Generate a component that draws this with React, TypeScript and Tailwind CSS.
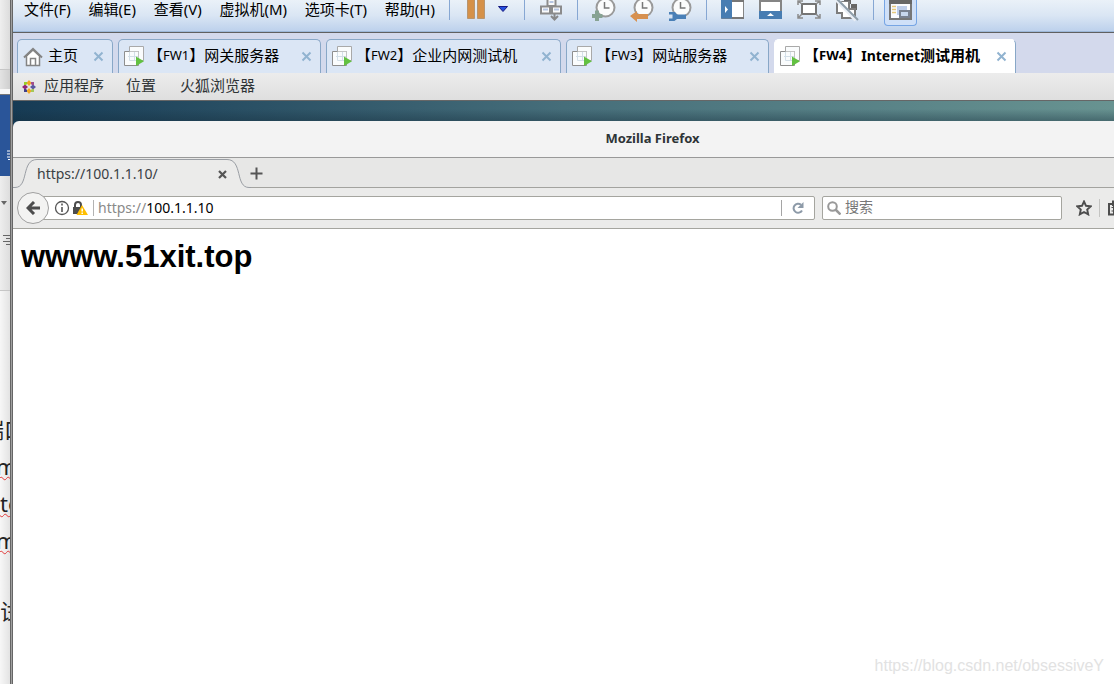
import React from "react";

const menus = ["文件(F)", "编辑(E)", "查看(V)", "虚拟机(M)", "选项卡(T)", "帮助(H)"];

const vmTabs = [
  { code: "FW1", name: "网关服务器", width: "w-[203px]" },
  { code: "FW2", name: "企业内网测试机", width: "w-[235px]" },
  { code: "FW3", name: "网站服务器", width: "w-[203px]" },
  { code: "FW4", name: "Internet测试用机", width: "w-[242px]", active: true },
];

function Separator() {
  return <span className="h-5 w-px shrink-0 bg-[#86a7d3]" />;
}

function ToolButton({ label, children }: { label: string; children: React.ReactNode }) {
  return (
    <button aria-label={label} className="h-6 w-6 shrink-0">
      <svg viewBox="0 0 24 24" width="24" height="24" fill="none">
        {children}
      </svg>
    </button>
  );
}

function Clock() {
  return (
    <>
      <circle cx="13.5" cy="7.5" r="9" fill="#fbfcfc" stroke="#9a9a9a" strokeWidth="2" />
      <path d="M12.5 2v6h5" stroke="#777" strokeWidth="1.5" />
    </>
  );
}

function CloseIcon() {
  return (
    <svg viewBox="0 0 11 11" width="11" height="11">
      <path d="M1.5 1.5l8 8M9.5 1.5l-8 8" stroke="#91b3d0" strokeWidth="2" />
    </svg>
  );
}

function VmIcon() {
  return (
    <svg viewBox="0 0 20 21" width="20" height="21" fill="none" className="shrink-0">
      <path d="M5.5.5h14v14h-14z" fill="#fafcfd" stroke="#a9a9a9" />
      <path d="M.5 5.5h14v14H.5z" fill="#fafcfd" stroke="#8e8e8e" />
      <path d="M5.500 5.500h9v9h-9z" fill="#fafcfd" />
      <path d="M5.5 6v8.500h8.500M10.500 6v8M4 10.500h10" stroke="#d3dfe8" />
      <path d="M12 10.500v9.500l8-4.700z" fill="#62c141" />
    </svg>
  );
}

function HomeIcon() {
  return (
    <svg viewBox="0 0 20 20" width="20" height="20" fill="none" className="shrink-0">
      <path d="M3.500 9v9.500h13V9L10 3z" fill="#fff" stroke="#848484" strokeWidth="1.500" />
      <path d="M1 10.500L10 2l9 8.500" stroke="#848484" strokeWidth="2" />
      <path d="M7.500 18v-6.500h5V18" stroke="#848484" strokeWidth="1.500" />
    </svg>
  );
}

function AppsIcon() {
  return (
    <svg viewBox="0 0 14 14" width="14" height="14" className="shrink-0">
      <path d="M7 0l2.500 3L7 6 4.500 3z" fill="#efa724" />
      <path d="M7 8l2.500 3L7 14l-2.500-3z" fill="#efa724" />
      <path d="M0 7l3-2.500L6 7 3 9.500z" fill="#932279" />
      <path d="M8 7l3-2.500L14 7l-3 2.500z" fill="#5a58a0" />
      <path d="M2 2h3v2L4 5H2z" fill="#9ccd2a" />
      <path d="M9 2h3v3h-2L9 4z" fill="#a14f8c" />
      <path d="M2 12V9h2l1 1v2z" fill="#41408a" />
      <path d="M12 12V9h-2l-1 1v2z" fill="#a6c958" />
    </svg>
  );
}

/* Word window that shows behind the left edge */
function BackWindow() {
  return (
    <aside className="flex w-2.5 shrink-0 flex-col overflow-hidden bg-linear-to-r from-[#f7f7f7] to-[#e3e3e3] font-['Noto_Sans','Noto_Sans_CJK_SC',sans-serif] text-[22px] text-[#222]">
      <div className="h-[70px] shrink-0 border-b border-[#c6c6c6] bg-linear-to-r from-[#efefef] to-[#dcdcdc]" />
      <div className="h-[19px] shrink-0 bg-linear-to-r from-[#e3e3e3] to-[#cfcfcf]" />
      <div className="h-[5px] shrink-0 bg-[#f7f7f7]" />
      <div className="flex h-[82px] shrink-0 items-end justify-end border-t border-[#777] bg-[#2a5599] pb-4">
        <svg viewBox="0 0 3 10" width="3" height="10">
          <path d="M0 1h3M0 4h3M0 7h3M1 9.500h2" stroke="#fff" />
        </svg>
      </div>
      <div className="flex h-[115px] shrink-0 flex-col justify-between border-b border-[#c6c6c6] bg-linear-to-r from-[#eeeeee] to-[#dddddd] pt-[25px] pb-11">
        <svg viewBox="0 0 10 5" width="10" height="5">
          <path d="M1 0h6L4 4z" fill="#666" />
        </svg>
        <svg viewBox="0 0 10 11" width="10" height="11">
          <path d="M3 .5h7M6 3.500h4M3 6.500h7M6 9.500h4" stroke="#666" />
        </svg>
      </div>
      <div className="flex flex-col pt-[120px] leading-[37px] whitespace-nowrap">
        <p className="-ml-[18px]">端口</p>
        <p className="-ml-1 underline decoration-[#e23b3b] decoration-wavy decoration-1">m</p>
        <p className="underline decoration-[#e23b3b] decoration-wavy decoration-1">to</p>
        <p className="-ml-1 underline decoration-[#e23b3b] decoration-wavy decoration-1">m</p>
        <p className="pt-[34px]">试</p>
      </div>
    </aside>
  );
}

function MenuBar() {
  return (
    <header className="flex h-8 shrink-0 items-start gap-[14px] overflow-hidden border-b border-[#9db8d9] bg-linear-to-b from-[#eaf1f8] via-[#dae6f4] to-[#bdd1ec] pl-[11px] text-black">
      <nav className="flex w-[411px] shrink-0 justify-between text-[15px] leading-[18px] whitespace-nowrap">
        {menus.map((m) => (
          <button key={m}>{m}</button>
        ))}
      </nav>
      <Separator />
      <ToolButton label="挂起">
        <path d="M3.500-1h7v19.500h-7zM13.500-1h7v19.500h-7z" fill="#d59149" stroke="#b8956f" />
      </ToolButton>
      <button aria-label="电源选项" className="-ml-1.5 h-5 w-3.5 shrink-0">
        <svg viewBox="0 0 14 20" width="14" height="20">
          <path d="M2.500 6.500h9L7 11.500z" fill="#2450e0" stroke="#171a80" />
        </svg>
      </button>
      <Separator />
      <ToolButton label="发送按键">
        <path d="M8.500-1h8v7h-8zM2 6.500h9v7H2zM13 6.500h9v7h-9z" fill="#fafafa" stroke="#8b8b8b" strokeWidth="2" />
        <path d="M4 9.500h5M15 9.500h5M10.500 2h4" stroke="#b5c5e2" strokeWidth="2" />
        <path d="M15.500 14v5M12 16l3.500 3.500L19 16" stroke="#888" strokeWidth="2" />
      </ToolButton>
      <Separator />
      <ToolButton label="拍摄快照">
        <Clock />
        <path d="M3 10.500h4v3.500h3.500v4H7V21H3v-3H0v-4h3z" fill="#87a393" />
      </ToolButton>
      <ToolButton label="恢复快照">
        <Clock />
        <path d="M0 16l7-5v3h11v5H7v3z" fill="#d79150" />
      </ToolButton>
      <ToolButton label="管理快照">
        <Clock />
        <path d="M1 12h6l2 2.500h9v4.500H9L6.500 21H1v-2.500h3.500v-4H1z" fill="#4a80b7" />
      </ToolButton>
      <Separator />
      <ToolButton label="显示库">
        <path d="M.5-1v19.500h22V.5H.5" fill="#fff" stroke="#858585" />
        <path d="M0 0h11v18.500H0z" fill="#487db2" />
        <path d="M4 6v7l3-3.500z" fill="#fff" />
        <path d="M11 1h12M11 18h12" stroke="#777" strokeWidth="2" />
      </ToolButton>
      <ToolButton label="显示缩略图">
        <path d="M1 1h21v17H1z" fill="#fff" stroke="#858585" strokeWidth="2" />
        <path d="M0 11h23v8H0z" fill="#487db2" />
        <path d="M8 16l3.500-3 3.500 3z" fill="#fff" />
      </ToolButton>
      <ToolButton label="全屏">
        <path d="M5 4h14v10H5z" fill="#fff" stroke="#757575" strokeWidth="2" />
        <path d="M1 5V1h5M18 1h5v4M1 14v4h5M18 18h5v-4M1 1l4 3M23 1l-4 3M1 18l4-4M23 18l-4-4" stroke="#8b8b8b" strokeWidth="1.500" />
      </ToolButton>
      <ToolButton label="Unity">
        <path d="M9 0h7v4H9zM16 4h6v6h-6z" fill="#666" />
        <path d="M2 2h12v11H2z" fill="#fff" stroke="#7d7d7d" strokeWidth="2" />
        <path d="M7 9h13v9H7z" fill="#fff" stroke="#7d7d7d" strokeWidth="2" />
        <path d="M3 2h10v10H3z" fill="#fff" />
        <path d="M2 0l19 20" stroke="#e9eef5" strokeWidth="4" />
        <path d="M2-1l21 21" stroke="#8e9da9" strokeWidth="2" />
      </ToolButton>
      <Separator />
      <button aria-label="控制台视图" className="-ml-1 flex h-[26px] w-[33px] shrink-0 justify-center rounded-b-sm border border-t-0 border-[#76a5e4] bg-[#cfe0f8]">
        <svg viewBox="0 0 23 20" width="23" height="20">
          <path d="M1 1h21v18H1z" fill="#fafbff" stroke="#777" strokeWidth="2" />
          <path d="M0 0h23v4H0z" fill="#666" />
          <path d="M3 6.500h4M3 9.500h4M3 12.500h4" stroke="#e6c87c" strokeWidth="1.500" />
          <path d="M8 6h10v9H8z" fill="#bdcdea" />
          <path d="M11 11h9v6h-9z" fill="#c8d7ed" stroke="#7a8291" strokeWidth="2" />
        </svg>
      </button>
    </header>
  );
}

function VmTabs() {
  return (
    <div className="flex h-[41px] shrink-0 items-end gap-[5px] overflow-hidden border-t border-[#606060] bg-[#d3d9ec] pl-1 text-[15px] whitespace-nowrap text-black">
      <div className="flex h-[34px] w-24 shrink-0 items-center rounded-t-[5px] border border-b-0 border-[#88a7c7] bg-[#dbe6f5] pr-2 pl-[5px]">
        <HomeIcon />
        <button className="ml-[5px] pb-0.5">主页</button>
        <button aria-label="关闭" className="ml-auto">
          <CloseIcon />
        </button>
      </div>
      {vmTabs.map((t) => (
        <div
          key={t.code}
          className={`flex h-[34px] shrink-0 items-center rounded-t-[5px] border border-b-0 pr-2 pl-[5px] ${t.width} ${
            t.active ? "border-white border-r-[#88a7c7] bg-white font-bold" : "border-[#88a7c7] bg-[#dbe6f5]"
          }`}
        >
          <VmIcon />
          <button className="ml-1 flex items-center pb-0.5">
            【<span className="text-[13px]">{t.code}</span>】
            {t.active ? (
              <>
                <span className="text-sm">Internet</span>测试用机
              </>
            ) : (
              t.name
            )}
          </button>
          <button aria-label="关闭" className="ml-auto">
            <CloseIcon />
          </button>
        </div>
      ))}
    </div>
  );
}

function GnomeBar() {
  return (
    <div className="flex h-7 shrink-0 items-center border-b border-[#666] bg-linear-to-b from-[#ececec] to-[#dfdfdf] pl-[9px] text-[15px] text-[#2f3436]">
      <AppsIcon />
      <button className="ml-2 pb-0.5">应用程序</button>
      <button className="ml-[22px] pb-0.5">位置</button>
      <button className="ml-6 pb-0.5">火狐浏览器</button>
    </div>
  );
}

function FirefoxTabs() {
  return (
    <div className="flex h-[30px] shrink-0 bg-[#e7e7e6] text-sm text-[#3a4044]">
      <svg viewBox="0 0 24 30" width="24" height="30" className="shrink-0">
        <path d="M0 30V29.500H2C16 29.500 8 1.500 24 1.500V30z" fill="#ebebea" />
        <path d="M0 29.500H2C16 29.500 8 1.500 24 1.500" fill="none" stroke="#9a9ea4" />
      </svg>
      <div className="mt-px flex w-[190px] items-center justify-between border-t border-[#9a9ea4] bg-[#ebebea]">
        <button>https://100.1.1.10/</button>
        <button aria-label="关闭标签页">
          <svg viewBox="0 0 9 9" width="9" height="9">
            <path d="M1 1l7 7M8 1L1 8" stroke="#555" strokeWidth="2.200" />
          </svg>
        </button>
      </div>
      <svg viewBox="0 0 24 30" width="24" height="30" className="shrink-0">
        <path d="M0 30V1.500C16 1.500 8 29.500 22 29.500H24V30z" fill="#ebebea" />
        <path d="M0 1.500C16 1.500 8 29.500 22 29.500H24" fill="none" stroke="#9a9ea4" />
      </svg>
      <div className="flex flex-1 items-center border-b border-[#a3a39f] pt-0.5">
        <button aria-label="新标签页" className="-ml-px">
          <svg viewBox="0 0 13 13" width="13" height="13">
            <path d="M6.500 .5v12M.5 6.500h12" stroke="#555" strokeWidth="2" />
          </svg>
        </button>
      </div>
    </div>
  );
}

function AddressBar() {
  return (
    <div className="flex h-[41px] shrink-0 items-center overflow-hidden border-b border-[#a5a59f] bg-[#ebebea] pl-1 text-sm">
      <button aria-label="后退" className="z-10 -mr-2 flex h-8 w-8 shrink-0 items-center justify-center rounded-full border border-[#a0a0a0] bg-[#f3f3f2]">
        <svg viewBox="0 0 14 14" width="14" height="14" fill="none">
          <path d="M8 1L2 7l6 6M2 7h12" stroke="#4d4d4d" strokeWidth="3" />
        </svg>
      </button>
      <div className="flex h-6 min-w-0 flex-1 items-center rounded-xs border border-[#a5a59f] bg-white pl-3">
        <svg viewBox="0 0 16 16" width="16" height="16" fill="none" className="shrink-0">
          <circle cx="8" cy="8" r="6.500" stroke="#555" strokeWidth="1.300" />
          <path d="M8 3.500v2M8 7v5" stroke="#555" strokeWidth="1.600" />
        </svg>
        <svg viewBox="0 0 16 16" width="16" height="16" fill="none" className="ml-0.5 shrink-0">
          <path d="M3 8V5a3 3 0 0 1 6 0v3" stroke="#4d4d4d" strokeWidth="2" />
          <path d="M1 7h10v7H1z" fill="#4d4d4d" />
          <path d="M10 5l6 10H4.500z" fill="#ffbf00" />
          <path d="M10.200 8.500v3M10.200 12.500v1.500" stroke="#fff" strokeWidth="1.500" />
        </svg>
        <span className="ml-[5px] h-4 w-px shrink-0 bg-[#b3b3b3]" />
        <label htmlFor="url" className="ml-1 text-[#8a8a8a]">
          https://
        </label>
        <input id="url" defaultValue="100.1.1.10" className="min-w-0 flex-1 bg-transparent text-black outline-none" />
        <span className="h-4 w-px shrink-0 bg-[#a5a5a5]" />
        <button aria-label="刷新" className="flex w-8 shrink-0 justify-center">
          <svg viewBox="0 0 12 12" width="12" height="12" fill="none">
            <path d="M9 2.800A4.500 4.500 0 1 0 10 8.500" stroke="#8d9aa8" strokeWidth="2" />
            <path d="M11.500 0v6H5.500z" fill="#8d9aa8" />
          </svg>
        </button>
      </div>
      <div className="ml-[7px] flex h-6 w-60 shrink-0 items-center rounded-xs border border-[#a5a59f] bg-white pl-1">
        <svg viewBox="0 0 14 14" width="14" height="14" fill="none" className="shrink-0">
          <circle cx="5.500" cy="5.500" r="4.300" stroke="#999" strokeWidth="2" />
          <path d="M8.500 8.500l5 5" stroke="#999" strokeWidth="2.500" />
        </svg>
        <input aria-label="搜索" placeholder="搜索" className="ml-1 min-w-0 flex-1 pb-0.5 outline-none placeholder:text-[#777]" />
      </div>
      <button aria-label="收藏" className="ml-3.5 shrink-0">
        <svg viewBox="0 0 16 16" width="16" height="16" fill="none">
          <path d="M8 1.500l2 4.300 4.700.5-3.500 3.200 1 4.900L8 12l-4.200 2.400 1-4.900L1.300 6.300 6 5.800z" stroke="#4d4d4d" strokeWidth="1.900" />
        </svg>
      </button>
      <span className="mr-2 ml-[7px] h-[18px] w-px shrink-0 bg-[#c4c4c2]" />
      <button aria-label="书签列表" className="w-1.5 shrink-0 overflow-hidden">
        <svg viewBox="0 0 16 16" width="16" height="16" fill="none">
          <path d="M5 4H1v10.500h14V4h-4M5 5V1.500h6V5z" stroke="#4d4d4d" strokeWidth="2" />
          <path d="M3.500 7.500h9M3.500 11h9M5.500 6v8" stroke="#4d4d4d" />
        </svg>
      </button>
    </div>
  );
}

export default function App() {
  return (
    <div className="relative flex h-screen w-full overflow-hidden bg-white font-['Noto_Sans','Noto_Sans_CJK_SC',sans-serif]">
      <BackWindow />
      <div className="w-[3px] shrink-0 border-x border-[#666] bg-[#a0a0a0]" />
      <div className="flex min-w-0 flex-1 flex-col">
        <MenuBar />
        <VmTabs />
        <GnomeBar />
        <div className="shrink-0 bg-linear-to-r from-[#163b55] via-[#466e7a] to-[#689391]">
          <div className="h-5 bg-linear-to-b from-transparent from-40% to-[#152d3c]/40" />
          <div className="flex h-[37px] items-center justify-center rounded-tl-md border-b border-[#999] bg-[#f3f3f3] pl-[178px]">
            <h2 className="text-[13px] font-bold text-[#2e3436]">Mozilla Firefox</h2>
          </div>
        </div>
        <FirefoxTabs />
        <AddressBar />
        <main className="flex-1 bg-white px-2 pt-2">
          <h1 className="font-['Liberation_Sans',sans-serif] text-[31px] leading-10 font-bold text-black">wwww.51xit.top</h1>
        </main>
      </div>
      <p className="absolute right-2.5 bottom-2 font-['Liberation_Sans',sans-serif] text-base leading-5 text-[#e2e2e2]">
        https://blog.csdn.net/obsessiveY
      </p>
    </div>
  );
}
